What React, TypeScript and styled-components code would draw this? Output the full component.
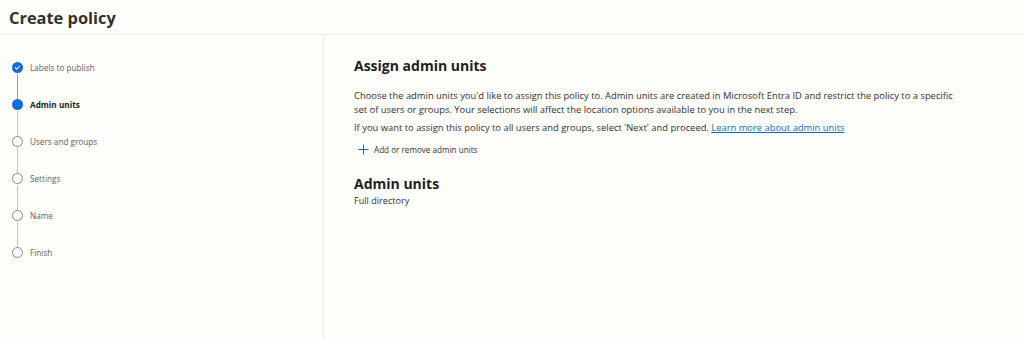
import React from "react";
import styled, { createGlobalStyle } from "styled-components";

const Global = createGlobalStyle`
  html, body { margin: 0; padding: 0; background: #fefefb; }
  body { font-family: "Segoe UI", "Open Sans", sans-serif; color: #323130; }
  * { box-sizing: border-box; }
`;

const Page = styled.div`
  width: 1024px;
  height: 339px;
  display: flex;
  flex-direction: column;
  background: #fefefb;
  overflow: hidden;
`;

const Header = styled.header`
  height: 35px;
  flex: none;
  border-bottom: 1px solid #edebe9;
  display: flex;
  align-items: center;
  padding-left: 9px;
`;

const Title = styled.h1`
  margin: 0;
  font-size: 16.4px;
  font-weight: 700;
  color: #323130;
`;

const Body = styled.div`
  flex: 1;
  display: flex;
`;

const Sidebar = styled.nav`
  width: 324px;
  flex: none;
  border-right: 1px solid #edebe9;
  padding: 27px 0 0 12px;
`;

const StepList = styled.ol`
  list-style: none;
  margin: 0;
  padding: 0;
`;

const Step = styled.li<{ $last?: boolean; $done?: boolean }>`
  position: relative;
  height: 37px;
  display: flex;
  align-items: flex-start;
  gap: 7px;
  &::after {
    content: "";
    display: ${(p) => (p.$last ? "none" : "block")};
    position: absolute;
    left: 5px;
    top: 12px;
    width: 1px;
    height: 25px;
    background: ${(p) => (p.$done ? "#6ea6e8" : "#c8c6c4")};
  }
`;

const Dot = styled.span<{ $state: "done" | "current" | "todo" }>`
  width: 11px;
  height: 11px;
  flex: none;
  border-radius: 50%;
  display: flex;
  align-items: center;
  justify-content: center;
  background: ${(p) => (p.$state === "todo" ? "transparent" : "#0f6cdb")};
  border: ${(p) => (p.$state === "todo" ? "1.5px solid #8a8886" : "none")};
`;

const StepLabel = styled.span<{ $active?: boolean }>`
  font-size: 8.2px;
  line-height: 11px;
  color: ${(p) => (p.$active ? "#201f1e" : "#605e5c")};
  font-weight: ${(p) => (p.$active ? 700 : 400)};
`;

const Main = styled.main`
  flex: 1;
  padding: 21px 0 0 30px;
`;

const H2 = styled.h2`
  margin: 0;
  font-size: 14px;
  font-weight: 700;
  line-height: 20px;
  color: #201f1e;
`;

const Para = styled.p<{ $mt: number }>`
  margin: ${(p) => p.$mt}px 0 0;
  font-size: 9.4px;
  line-height: 13.5px;
  color: #323130;
  max-width: 610px;
`;

const Link = styled.a`
  color: #0f6cbd;
  text-decoration: underline;
`;

const AddButton = styled.button`
  margin-top: 9px;
  border: none;
  background: none;
  padding: 0 0 0 4px;
  display: flex;
  align-items: center;
  gap: 5px;
  font-family: inherit;
  font-size: 8.15px;
  color: #323130;
  cursor: pointer;
`;

const SectionTitle = styled(H2)`
  margin-top: 19px;
`;

const SubText = styled.div`
  margin-top: 1px;
  font-size: 9.1px;
  line-height: 12px;
  color: #323130;
`;

const Check = () => (
  <svg width="7" height="7" viewBox="0 0 8 8">
    <path d="M1.4 4.2 L3.2 5.9 L6.6 2.3" fill="none" stroke="#fff" strokeWidth="1.2" strokeLinecap="round" strokeLinejoin="round" />
  </svg>
);

const Plus = () => (
  <svg width="11" height="11" viewBox="0 0 11 11">
    <path d="M5.5 0.5 V10.5 M0.5 5.5 H10.5" stroke="#0f6cbd" strokeWidth="1" />
  </svg>
);

const steps: { label: string; state: "done" | "current" | "todo" }[] = [
  { label: "Labels to publish", state: "done" },
  { label: "Admin units", state: "current" },
  { label: "Users and groups", state: "todo" },
  { label: "Settings", state: "todo" },
  { label: "Name", state: "todo" },
  { label: "Finish", state: "todo" },
];

export default function App() {
  return (
    <Page>
      <Global />
      <Header>
        <Title>Create policy</Title>
      </Header>
      <Body>
        <Sidebar>
          <StepList>
            {steps.map((s, i) => (
              <Step key={s.label} $last={i === steps.length - 1} $done={s.state === "done"}>
                <Dot $state={s.state}>{s.state === "done" && <Check />}</Dot>
                <StepLabel $active={s.state === "current"}>{s.label}</StepLabel>
              </Step>
            ))}
          </StepList>
        </Sidebar>
        <Main>
          <H2>Assign admin units</H2>
          <Para $mt={13}>
            Choose the admin units you'd like to assign this policy to. Admin units are created in Microsoft Entra ID and restrict the policy to a specific set of users or groups. Your selections will affect the location options available to you in the next step.
          </Para>
          <Para $mt={5}>
            If you want to assign this policy to all users and groups, select 'Next' and proceed. <Link href="#">Learn more about admin units</Link>
          </Para>
          <AddButton>
            <Plus />
            Add or remove admin units
          </AddButton>
          <SectionTitle>Admin units</SectionTitle>
          <SubText>Full directory</SubText>
        </Main>
      </Body>
    </Page>
  );
}
